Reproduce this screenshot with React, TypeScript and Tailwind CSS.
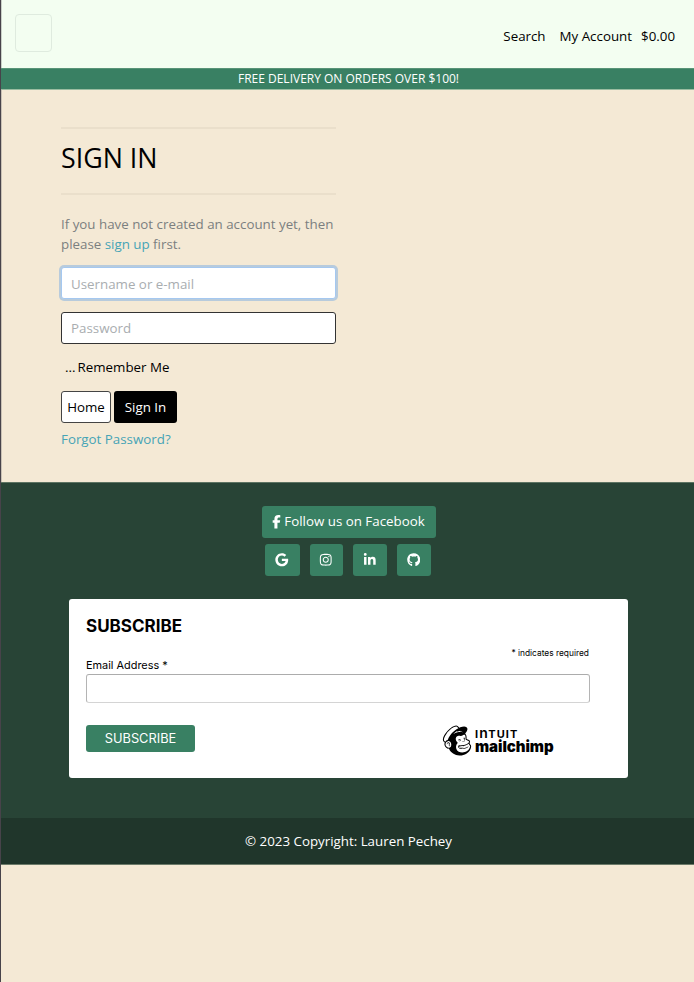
import React from 'react';
import { FaGoogle, FaInstagram, FaLinkedinIn, FaGithub } from 'react-icons/fa';
import { FaFacebookF } from 'react-icons/fa6';
import { SiMailchimp } from 'react-icons/si';

function Social({ children, className }: { children: React.ReactNode; className: string }) {
  return (
    <a className={`flex h-8 items-center justify-center rounded-[3px] bg-[#398063] text-[13.5px] text-white ${className}`}>
      {children}
    </a>
  );
}

export default function App() {
  return (
    <div className="flex h-[982px] w-[694px] overflow-hidden bg-[#f4e9d5] font-['Open_Sans','Noto_Sans',sans-serif] text-[13.33px] leading-5 text-black">
      <div className="w-px shrink-0 bg-[#47434a]" />
      <div className="flex min-w-0 grow flex-col">
        <header className="flex h-[68px] items-start justify-between border-l border-[#c9d0c7] bg-[#f3fef1] pl-[13px] pr-[19px] pt-[14px]">
          <div className="h-[38px] w-[37px] rounded-[4px] border border-[#dfebdf]" />
          <nav className="flex whitespace-nowrap pt-3">
            <a className="mr-[14px]">Search</a>
            <a className="mr-[9px]">My Account</a>
            <a>$0.00</a>
          </nav>
        </header>
        <div className="h-[22px] border-b border-t border-b-[#9bbda1] border-t-[#589477] bg-[#398063] pl-[2px] text-center text-[12px] leading-[20px] text-white">
          FREE DELIVERY ON ORDERS OVER $100!
        </div>

        <main className="flex h-[392px] flex-col border-l border-[#c9c1b5] pl-[59px] pt-[37px]">
          <div className="w-[275px]">
            <hr className="h-[2px] border-0 bg-[#eadfcb]" />
            <h1 className="h-16 pt-[11px] text-[26.8px] leading-9">SIGN IN</h1>
            <hr className="h-[2px] border-0 bg-[#eadfcb]" />
            <p className="mt-[19px] whitespace-nowrap text-[#7b7f80]">
              If you have not created an account yet, then
              <br />
              please <a className="text-[#46a4b5]">sign up</a> first.
            </p>
            <input
              className="mt-[13px] block h-8 w-full rounded-[3px] border border-[#a5c8f0] bg-white px-[9px] pt-px shadow-[0_0_0_2px_#b8cbdc] outline-none placeholder:text-[#a9adb0]"
              placeholder="Username or e-mail"
            />
            <input
              className="mt-[13px] block h-8 w-full rounded-[3px] border border-[#333] bg-white px-[9px] outline-none placeholder:text-[#a9adb0]"
              placeholder="Password"
            />
            <div className="mt-[13px] flex pl-1">
              <span className="mr-[2px]">...</span>
              <span>Remember Me</span>
            </div>
            <div className="mt-[14px] flex gap-[3px]">
              <button className="h-8 w-[50px] rounded-[3px] border border-[#444] bg-white">Home</button>
              <button className="h-8 w-[63px] rounded-[3px] bg-black text-white">Sign In</button>
            </div>
            <a className="mt-[6px] block text-[#46a4b5]">Forgot Password?</a>
          </div>
        </main>

        <footer className="flex flex-col">
          <div className="flex h-[336px] flex-col items-center border-t border-[#5d7362] bg-[#284436] pl-[2px] pt-[23px]">
            <a className="flex h-8 w-[174px] items-center justify-center gap-[3px] rounded-[3px] bg-[#398063] text-white">
              <FaFacebookF className="h-[13.4px] w-[9px]" />
              <span className="mb-[2px] whitespace-nowrap">Follow us on Facebook</span>
            </a>
            <div className="mr-[2px] mt-[6px] flex gap-[10px]">
              <Social className="w-[35px]"><FaGoogle /></Social>
              <Social className="w-[33px]"><FaInstagram /></Social>
              <Social className="w-[34px]"><FaLinkedinIn /></Social>
              <Social className="w-[34px]"><FaGithub /></Social>
            </div>
            <section className="mt-[23px] h-[179px] w-[559px] rounded-[3px] bg-white pl-[17px] pr-[38px] pt-[15px] font-['Inter',sans-serif]">
              <h2 className="text-[17px] font-bold leading-6">SUBSCRIBE</h2>
              <div className="mt-[9px] h-3 pr-px text-right text-[8.4px] leading-3">* indicates required</div>
              <label className="block h-[15px] text-[10.9px] leading-[13px]">Email Address *</label>
              <div className="h-[29px] w-full rounded-[3px] border border-b-[#d4d4d4] border-l-[#b4b4b4] border-r-[#b4b4b4] border-t-[#acacac]" />
              <div className="mt-[22px] flex items-start">
                <button className="h-[27px] w-[109px] rounded-[3px] bg-[#398063] pt-px text-[12.8px] text-white">SUBSCRIBE</button>
                <div className="ml-[247px] flex items-start">
                  <SiMailchimp className="h-[31px] w-[30px]" />
                  <div className="ml-[3px] flex flex-col">
                    <span className="flex h-[13px] items-baseline text-[11px] font-bold leading-[16px] tracking-[1.1px]">
                      I<span className="text-[14px] font-semibold leading-[16px] tracking-[0.5px]">n</span>TUIT
                    </span>
                    <span className="text-[15px] font-black leading-[18px] tracking-[-0.05px]">mailchimp</span>
                  </div>
                </div>
              </div>
            </section>
          </div>
          <div className="h-[47px] border-b border-[#6b7a69] bg-[#20362b] pl-[2px] pt-[13px] text-center text-white">
            © 2023 Copyright: Lauren Pechey
          </div>
        </footer>
      </div>
    </div>
  );
}
